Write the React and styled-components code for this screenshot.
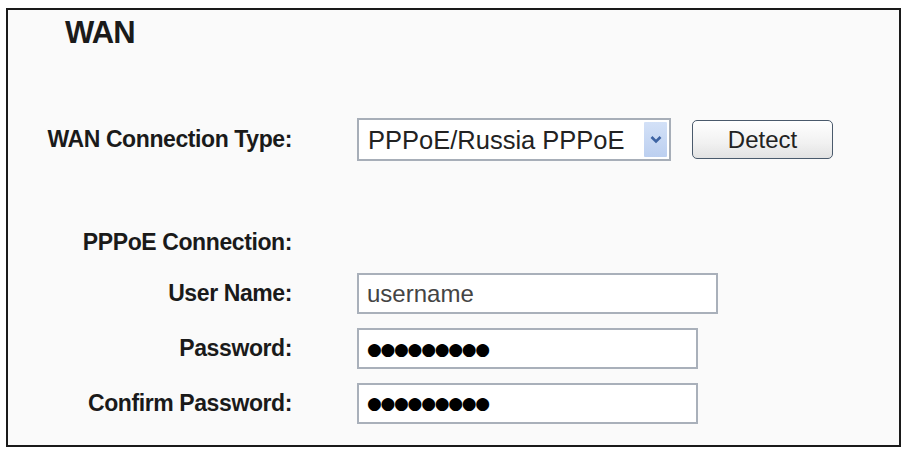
import React from "react";
import styled, { createGlobalStyle } from "styled-components";

const Global = createGlobalStyle`
  html, body { margin: 0; padding: 0; background: #ffffff; }
  body { font-family: "Liberation Sans", Arial, sans-serif; }
`;

const Frame = styled.section`
  box-sizing: border-box;
  margin: 8px 0 0 6px;
  width: 895px;
  height: 439px;
  border: 2px solid #1a1a1a;
  background: #fafafa;
  padding: 5px 0 0 32px;
  display: flex;
  flex-direction: column;
`;

const Title = styled.h1`
  margin: 0 0 0 25px;
  font-family: "Liberation Sans", Arial, sans-serif;
  font-weight: bold;
  font-size: 31px;
  letter-spacing: -0.8px;
  line-height: 36px;
  color: #1a1a1a;
`;

const Row = styled.div`
  display: grid;
  grid-template-columns: 252px auto;
  column-gap: 65px;
  align-items: center;
  margin-top: ${(p) => p.$gap}px;
  min-height: ${(p) => p.$h || 30}px;
`;

const Label = styled.label`
  justify-self: end;
  font-family: "Liberation Sans", Arial, sans-serif;
  font-weight: bold;
  font-size: 23px;
  letter-spacing: -0.4px;
  color: #1a1a1a;
  white-space: nowrap;
`;

const Controls = styled.div`
  display: flex;
  align-items: center;
  gap: 21px;
`;

const SelectBox = styled.div`
  box-sizing: border-box;
  display: flex;
  align-items: stretch;
  width: 314px;
  height: 43px;
  border: 2px solid #a7aeb8;
  background: #ffffff;
  padding: 2px;
`;

const NativeSelect = styled.select`
  appearance: none;
  -webkit-appearance: none;
  flex: 1;
  min-width: 0;
  border: none;
  outline: none;
  background: transparent;
  padding: 0 0 0 7px;
  font-family: "Liberation Sans", Arial, sans-serif;
  font-size: 25.5px;
  color: #222;
`;

const Arrow = styled.span`
  width: 23px;
  display: flex;
  align-items: center;
  justify-content: center;
  background: linear-gradient(#d3e1f7, #bccff0);
  border-radius: 1px;
`;

const Button = styled.button`
  box-sizing: border-box;
  width: 141px;
  height: 39px;
  border: 1.5px solid #4a5a6c;
  border-radius: 5px;
  background: linear-gradient(#ffffff, #f1f1f1 60%, #e2e2e2);
  font-family: "Liberation Sans", Arial, sans-serif;
  font-size: 24px;
  color: #222;
  padding: 0;
`;

const TextInput = styled.input`
  box-sizing: border-box;
  width: ${(p) => p.$w}px;
  height: 41px;
  border: 2px solid #a9b0ba;
  background: #ffffff;
  padding: 0 8px;
  font-family: ${(p) => (p.$dots ? '"DejaVu Sans", sans-serif' : '"Liberation Sans", Arial, sans-serif')};
  font-size: ${(p) => (p.$dots ? 17 : 24)}px;
  letter-spacing: ${(p) => (p.$dots ? -1.3 : 0)}px;
  color: ${(p) => (p.$dots ? "#000" : "#444")};
  outline: none;
`;

const Chevron = () => (
  <svg width="12" height="9" viewBox="0 0 12 9">
    <path d="M1.5 2 L6 6.5 L10.5 2" fill="none" stroke="#3d63a3" strokeWidth="2.6" />
  </svg>
);

export default function App() {
  return (
    <>
      <Global />
      <Frame>
        <Title>WAN</Title>
        <Row $gap={67} $h={43}>
          <Label>WAN Connection Type:</Label>
          <Controls>
            <SelectBox>
              <NativeSelect defaultValue="pppoe">
                <option value="pppoe">PPPoE/Russia PPPoE</option>
                <option value="dynamic">Dynamic IP</option>
                <option value="static">Static IP</option>
              </NativeSelect>
              <Arrow>
                <Chevron />
              </Arrow>
            </SelectBox>
            <Button type="button">Detect</Button>
          </Controls>
        </Row>
        <Row $gap={66} $h={30}>
          <Label>PPPoE Connection:</Label>
        </Row>
        <Row $gap={16} $h={41}>
          <Label>User Name:</Label>
          <TextInput $w={361} defaultValue="username" />
        </Row>
        <Row $gap={14} $h={41}>
          <Label>Password:</Label>
          <TextInput $w={341} $dots readOnly value="●●●●●●●●●" />
        </Row>
        <Row $gap={13} $h={42}>
          <Label>Confirm Password:</Label>
          <TextInput $w={341} $dots readOnly value="●●●●●●●●●" />
        </Row>
      </Frame>
    </>
  );
}
